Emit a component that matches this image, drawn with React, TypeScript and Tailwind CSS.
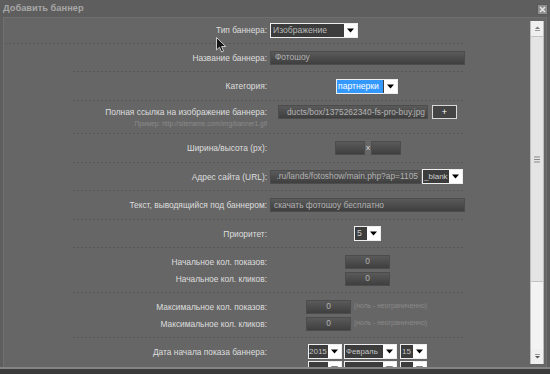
import React from "react";

const SEP =
  "h-px shrink-0 bg-[repeating-linear-gradient(90deg,#575757_0px,#575757_2px,transparent_2px,transparent_4px)]";
const LABEL = "w-[194px] shrink-0 text-right text-[#dedede] text-[8.4px] leading-[14px] whitespace-nowrap";
const INPUT =
  "h-[14px] shrink-0 bg-linear-to-b from-[#5a5a5a] to-[#3f3f3f] border border-[#4c4c4c] text-[#b2b2b2] text-[8.4px] flex items-center overflow-hidden whitespace-nowrap";

function Arrow() {
  return (
    <svg width="7" height="5" viewBox="0 0 7 5">
      <path d="M0 0.5H7L3.5 4.5Z" fill="#000" />
    </svg>
  );
}

function Select({ className, children }: { className: string; children: React.ReactNode }) {
  return (
    <div className={`flex shrink-0 h-[15px] border border-[#eeeeee] bg-[#eeeeee] ${className}`}>
      <div className="flex-1 min-w-0 bg-[#3c3c3c] flex items-center overflow-hidden whitespace-nowrap text-[8.6px] text-[#b8b8b8]">
        {children}
      </div>
      <div className="w-[13px] shrink-0 flex items-center justify-center bg-white">
        <Arrow />
      </div>
    </div>
  );
}

export default function App() {
  return (
    <div className="w-[550px] h-[374px] bg-[#5e5e5e] relative overflow-hidden font-['Liberation_Sans',Arial,sans-serif]">
      {/* title bar */}
      <div className="h-[17px] flex items-center justify-between pl-[3px] pr-[2px]">
        <span className="text-[9.3px] font-bold text-[#a6a6a6] leading-none">Добавить баннер</span>
        <div className="w-[11px] h-[11px] bg-[#8e8e8e] border border-[#5a5a5a] flex items-center justify-center mt-[1px]">
          <svg width="7" height="7" viewBox="0 0 7 7">
            <path d="M1 1L6 6M6 1L1 6" stroke="#e4e4e4" strokeWidth="1.6" />
          </svg>
        </div>
      </div>

      {/* panel */}
      <div className="mx-[3px] h-[350px] border-l border-t border-r border-[#6f6f6f] bg-[#666666] flex overflow-hidden">
        <div className="flex-1 min-w-0">
          {/* row 1 */}
          <div className="ml-[1px] w-[460px] h-[25px] flex items-center gap-[3px]">
            <div className="w-[262px] shrink-0 text-right text-[#dedede] text-[8.4px] whitespace-nowrap">Тип баннера:</div>
            <Select className="w-[88px]">
              <span className="pl-[2px]">Изображение</span>
            </Select>
          </div>
          <div className={`ml-[1px] w-[460px] ${SEP}`} />

          <div className="ml-[69px] w-[392px] flex flex-col">
            {/* row 2 */}
            <div className="h-[27px] shrink-0 flex items-center gap-[3px]">
              <div className={LABEL}>Название баннера:</div>
              <div className={`${INPUT} w-[195px] pl-[4px]`}>Фотошоу</div>
            </div>
            <div className={SEP} />

            {/* row 3 */}
            <div className="h-[28px] shrink-0 flex items-center gap-[3px]">
              <div className={LABEL}>Категория:</div>
              <div className="pl-[66px]">
                <Select className="w-[62px]">
                  <span className="bg-[#3399ff] text-white h-full flex items-center px-[1px] w-[46px]">партнерки</span>
                </Select>
              </div>
            </div>
            <div className={SEP} />

            {/* row 4 */}
            <div className="h-[32px] shrink-0 flex items-start gap-[3px] pt-[4px]">
              <div className="w-[194px] shrink-0 flex flex-col items-end">
                <div className="text-[#dedede] text-[8.4px] leading-[14px] whitespace-nowrap">
                  Полная ссылка на изображение баннера:
                </div>
                <div className="text-[#8b8b8b] text-[6.6px] leading-[10px] whitespace-nowrap">
                  Пример: http://sitename.com/img/banner1.gif
                </div>
              </div>
              <div className={`${INPUT} w-[150px] ml-[8px] justify-end pr-[2px]`}>
                <span>ducts/box/1375262340-fs-pro-buy.jpg</span>
              </div>
              <div className="w-[25px] h-[14px] ml-[1px] bg-[#444444] border border-[#d8d8d8] text-white text-[9px] flex items-center justify-center leading-none">
                +
              </div>
            </div>
            <div className={SEP} />

            {/* row 5 */}
            <div className="h-[28px] shrink-0 flex items-center gap-[3px]">
              <div className={LABEL}>Ширина/высота (px):</div>
              <div className="flex items-center pl-[65px]">
                <div className={`${INPUT} w-[30px]`} />
                <span className="text-[#dcdcdc] text-[8px] w-[6px] text-center">x</span>
                <div className={`${INPUT} w-[30px]`} />
              </div>
            </div>
            <div className={SEP} />

            {/* row 6 */}
            <div className="h-[27px] shrink-0 flex items-center gap-[3px]">
              <div className={LABEL}>Адрес сайта (URL):</div>
              <div className={`${INPUT} w-[151px] justify-end pr-[2px]`}>
                <span>.ru/lands/fotoshow/main.php?ap=1105</span>
              </div>
              <Select className="w-[41px] -ml-[2px]">
                <span className="pl-[1px] text-[#d0d0d0] text-[8px]">_blank</span>
              </Select>
            </div>
            <div className={SEP} />

            {/* row 7 */}
            <div className="h-[28px] shrink-0 flex items-center gap-[3px]">
              <div className={LABEL}>Текст, выводящийся под баннером:</div>
              <div className={`${INPUT} w-[195px] pl-[3px]`}>скачать фотошоу бесплатно</div>
            </div>
            <div className={SEP} />

            {/* row 8 */}
            <div className="h-[27px] shrink-0 flex items-center gap-[3px]">
              <div className={LABEL}>Приоритет:</div>
              <div className="pl-[84px]">
                <Select className="w-[27px]">
                  <span className="pl-[2px] text-[#cfcfcf]">5</span>
                </Select>
              </div>
            </div>
            <div className={SEP} />

            {/* row 9 */}
            <div className="h-[44px] shrink-0 flex flex-col justify-center">
              <div className="h-[17px] flex items-center gap-[3px]">
                <div className={LABEL}>Начальное кол. показов:</div>
                <div className={`${INPUT} w-[45px] ml-[75px] justify-center`}>0</div>
              </div>
              <div className="h-[17px] flex items-center gap-[3px]">
                <div className={LABEL}>Начальное кол. кликов:</div>
                <div className={`${INPUT} w-[45px] ml-[75px] justify-center`}>0</div>
              </div>
            </div>
            <div className={SEP} />

            {/* row 10 */}
            <div className="h-[44px] shrink-0 flex flex-col justify-center">
              <div className="h-[17px] flex items-center gap-[3px]">
                <div className={LABEL}>Максимальное кол. показов:</div>
                <div className={`${INPUT} w-[45px] ml-[36px] justify-center`}>0</div>
                <span className="text-[#8a8a8a] text-[6.8px] whitespace-nowrap">(ноль - неограниченно)</span>
              </div>
              <div className="h-[17px] flex items-center gap-[3px]">
                <div className={LABEL}>Максимальное кол. кликов:</div>
                <div className={`${INPUT} w-[45px] ml-[36px] justify-center`}>0</div>
                <span className="text-[#8a8a8a] text-[6.8px] whitespace-nowrap">(ноль - неограниченно)</span>
              </div>
            </div>
            <div className={SEP} />

            {/* row 11 */}
            <div className="pt-[5px] shrink-0 flex flex-col">
              <div className="h-[17px] flex items-center gap-[3px]">
                <div className={LABEL}>Дата начала показа баннера:</div>
                <div className="flex items-center gap-[2px] ml-[38px]">
                  <Select className="w-[34px]">
                    <span className="text-[#c4c4c4] text-[8px]">2015</span>
                  </Select>
                  <Select className="w-[53px]">
                    <span className="pl-[1px] text-[#c4c4c4] text-[7.8px]">Февраль</span>
                  </Select>
                  <Select className="w-[27px] ml-[1px]">
                    <span className="pl-[1px] text-[#c4c4c4] text-[8px]">15</span>
                  </Select>
                </div>
              </div>
              <div className="h-[17px] flex items-center gap-[3px]">
                <div className={LABEL}></div>
                <div className="flex items-center gap-[2px] ml-[38px]">
                  <Select className="w-[34px]">
                    <span />
                  </Select>
                  <Select className="w-[53px]">
                    <span />
                  </Select>
                  <Select className="w-[27px] ml-[1px]">
                    <span />
                  </Select>
                </div>
              </div>
            </div>
          </div>
        </div>

        {/* scrollbar */}
        <div className="w-[14px] h-[343px] mt-[3px] mr-[2px] shrink-0 flex flex-col bg-[#efefef] border-l border-r border-[#bdbdbd]">
          <div className="h-[15px] shrink-0 flex items-center justify-center">
            <svg width="7" height="5" viewBox="0 0 7 5">
              <path d="M1 3L3.5 0.5L6 3Z" fill="#7a7a7a" />
              <path d="M1 4.5H6" stroke="#9a9a9a" strokeWidth="1" />
            </svg>
          </div>
          <div className="h-[246px] shrink-0 bg-[#e4e4e4] border-t border-b border-[#c4c4c4] flex items-center justify-center">
            <svg width="6" height="7" viewBox="0 0 6 7">
              <path d="M0 1H6M0 3.5H6M0 6H6" stroke="#8a8a8a" strokeWidth="1" />
            </svg>
          </div>
          <div className="flex-1 bg-[#f3f3f3]" />
          <div className="h-[15px] shrink-0 flex items-center justify-center">
            <svg width="7" height="5" viewBox="0 0 7 5">
              <path d="M1 0.5H6" stroke="#9a9a9a" strokeWidth="1" />
              <path d="M1 2L3.5 4.5L6 2Z" fill="#555" />
            </svg>
          </div>
        </div>
      </div>

      {/* bottom edge */}
      <div className="h-[2px] bg-[#858585]" />
      <div className="h-[5px] bg-[#3b3b3b]" />

      {/* mouse cursor */}
      <svg className="absolute left-[216px] top-[37px]" width="11" height="16" viewBox="0 0 11 16">
        <path
          d="M0.5 0.5V13L3.5 10.2L5.6 15L7.6 14.1L5.6 9.5H9.7Z"
          fill="#151515"
          stroke="#d8d8d8"
          strokeWidth="0.9"
        />
      </svg>
    </div>
  );
}
